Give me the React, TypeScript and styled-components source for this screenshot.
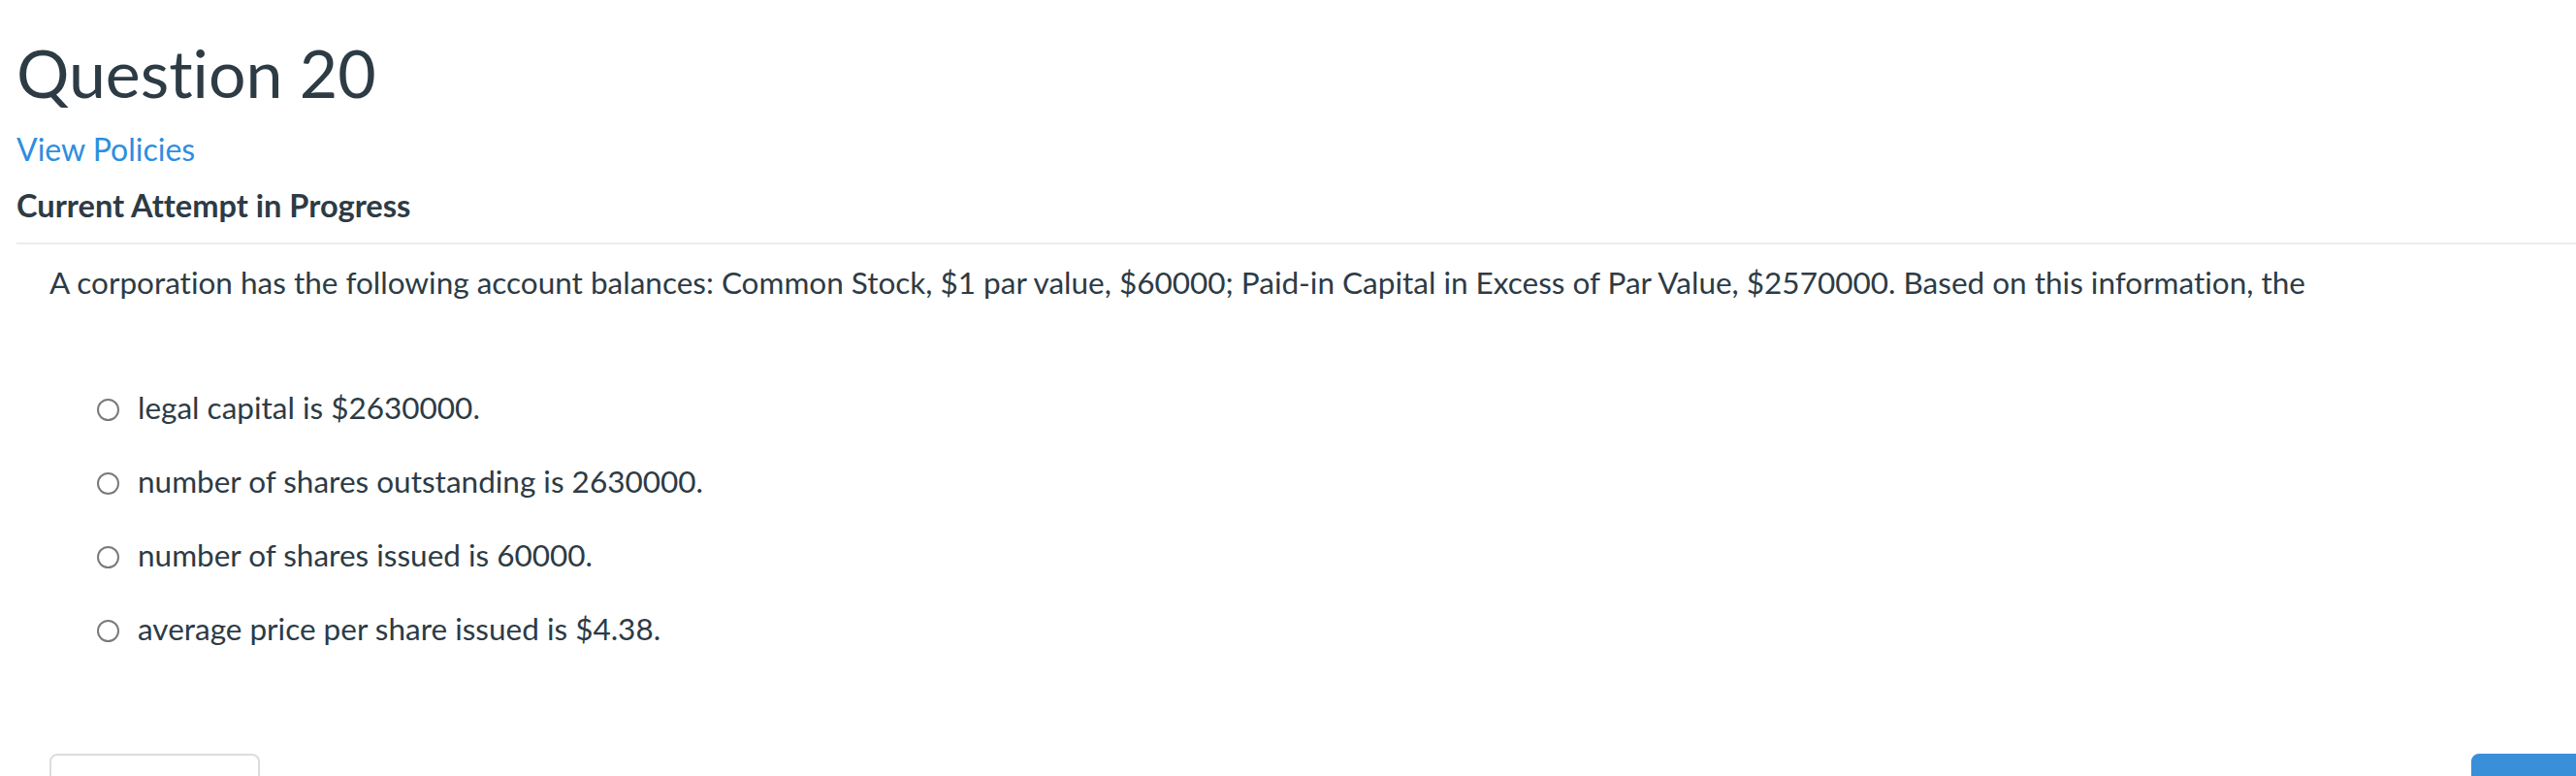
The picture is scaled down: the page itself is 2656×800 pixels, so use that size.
import styled, { createGlobalStyle } from "styled-components";

const GlobalStyle = createGlobalStyle`
  html, body {
    margin: 0;
    padding: 0;
    background: #ffffff;
  }
  body {
    font-family: Lato, "Open Sans", "Liberation Sans", sans-serif;
    font-variant-ligatures: none;
    color: #2d3b45;
    overflow: hidden;
  }
`;

const Page = styled.div`
  width: 2656px;
  height: 800px;
  overflow: hidden;
  box-sizing: border-box;
  padding: 41px 0 0 17px;
`;

const Heading = styled.h1`
  margin: 0;
  font-size: 68px;
  font-weight: 400;
  line-height: 1;
  color: #2d3b45;
`;

const PolicyLink = styled.a`
  display: block;
  margin-top: 29px;
  font-size: 32px;
  line-height: 1;
  color: #2d8ee0;
  text-decoration: none;
`;

const Status = styled.h2`
  margin: 26px 0 0;
  font-size: 32.6px;
  font-weight: 700;
  line-height: 1;
`;

const Divider = styled.hr`
  margin: 21px 0 0;
  border: none;
  height: 2px;
  background: #ececec;
`;

const QuestionText = styled.p`
  margin: 24px 0 0 34px;
  font-size: 31.5px;
  line-height: 1;
`;

const Options = styled.div`
  display: flex;
  flex-direction: column;
  gap: 44.5px;
  margin: 98px 0 0 83px;
`;

const Option = styled.label`
  display: flex;
  align-items: center;
  gap: 19px;
  font-size: 31.5px;
  line-height: 1;
`;

const Radio = styled.span`
  width: 19px;
  height: 19px;
  border: 2px solid #7a7a7a;
  border-radius: 50%;
  flex-shrink: 0;
  margin-top: 3px;
`;

const Footer = styled.div`
  display: flex;
  justify-content: space-between;
  margin: 112px 0 0 34px;
`;

const Button = styled.button<{ $primary?: boolean }>`
  width: ${(p) => (p.$primary ? "160px" : "217px")};
  height: 60px;
  border-radius: 8px;
  border: 2px solid ${(p) => (p.$primary ? "#3a8fd9" : "#dcdcdc")};
  background: ${(p) => (p.$primary ? "#3a8fd9" : "#ffffff")};
  margin-right: ${(p) => (p.$primary ? "-52px" : "0")};
`;

const options = [
  "legal capital is $2630000.",
  "number of shares outstanding is 2630000.",
  "number of shares issued is 60000.",
  "average price per share issued is $4.38.",
];

export default function App() {
  return (
    <>
      <GlobalStyle />
      <Page>
        <Heading>Question 20</Heading>
        <PolicyLink href="#">View Policies</PolicyLink>
        <Status>Current Attempt in Progress</Status>
        <Divider />
        <QuestionText>
          A corporation has the following account balances: Common Stock, $1 par value, $60000; Paid-in
          Capital in Excess of Par Value, $2570000. Based on this information, the
        </QuestionText>
        <Options>
          {options.map((o) => (
            <Option key={o}>
              <Radio />
              {o}
            </Option>
          ))}
        </Options>
        <Footer>
          <Button />
          <Button $primary />
        </Footer>
      </Page>
    </>
  );
}
